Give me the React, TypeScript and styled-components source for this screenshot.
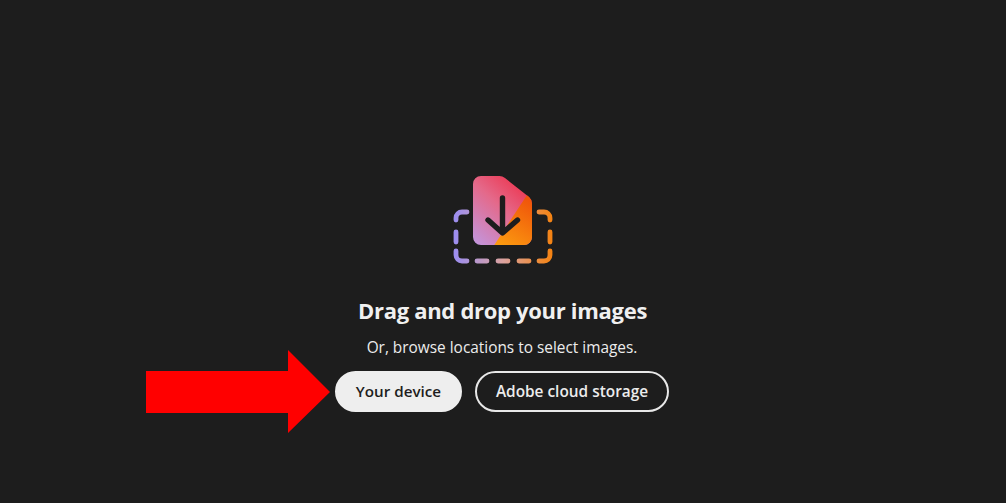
import React from 'react';
import styled, { createGlobalStyle } from 'styled-components';

const GlobalStyle = createGlobalStyle`
  html, body {
    margin: 0;
    padding: 0;
    background: #1d1d1d;
  }
`;

const Page = styled.main`
  height: 503px;
  overflow: hidden;
  padding-top: 175px;
  box-sizing: border-box;
  display: flex;
  flex-direction: column;
  align-items: center;
  background: #1d1d1d;
  color: #f0f0f0;
  font-family: "Open Sans", "Noto Sans", sans-serif;
`;

const DropIcon = styled.svg`
  display: block;
  margin-bottom: 30px;
`;

const Title = styled.h1`
  margin: 0 1px 13px 0;
  font-size: 22px;
  line-height: 30px;
  font-weight: 700;
  letter-spacing: -0.3px;
  color: #f0f0f0;
`;

const Subtitle = styled.p`
  margin: 0 2px 13px 0;
  font-size: 15.4px;
  line-height: 20px;
  color: #ececec;
`;

const Actions = styled.div`
  position: relative;
  display: flex;
  gap: 13px;
  margin-right: 2px;
`;

const Button = styled.button<{ $primary?: boolean }>`
  height: 41px;
  width: ${(p) => (p.$primary ? '127px' : '194px')};
  padding: 0;
  box-sizing: border-box;
  border: 2px solid ${(p) => (p.$primary ? '#eeeeee' : '#e8e8e8')};
  border-radius: 21px;
  background: ${(p) => (p.$primary ? '#eeeeee' : 'transparent')};
  color: ${(p) => (p.$primary ? '#1d1d1d' : '#ececec')};
  font-family: inherit;
  font-size: ${(p) => (p.$primary ? '15.2px' : '15.4px')};
  font-weight: 600;
  line-height: 35px;
`;

const Pointer = styled.svg`
  position: absolute;
  top: -21px;
  right: calc(100% + 5px);
`;

const FileIcon = () => (
  <DropIcon width="100" height="90" viewBox="0 0 100 90" fill="none">
    <defs>
      <linearGradient id="doc" x1="22" y1="68" x2="76" y2="8" gradientUnits="userSpaceOnUse">
        <stop offset="0" stopColor="#c395dc" />
        <stop offset="0.55" stopColor="#e4698a" />
        <stop offset="1" stopColor="#ee2f48" />
      </linearGradient>
      <linearGradient id="corner" x1="48" y1="70" x2="76" y2="26" gradientUnits="userSpaceOnUse">
        <stop offset="0" stopColor="#fb9a10" />
        <stop offset="1" stopColor="#f0560a" />
      </linearGradient>
      <linearGradient id="dash" x1="0" y1="0" x2="100" y2="0" gradientUnits="userSpaceOnUse">
        <stop offset="0" stopColor="#9a8df2" />
        <stop offset="0.5" stopColor="#dba3a0" />
        <stop offset="1" stopColor="#f5820f" />
      </linearGradient>
      <clipPath id="sheet">
        <path d="M28 1H46a9 9 0 0 1 6 2L76 22a9 9 0 0 1 3 7V62a8 8 0 0 1-8 8H28a8 8 0 0 1-8-8V9a8 8 0 0 1 8-8Z" />
      </clipPath>
    </defs>
    <g stroke="url(#dash)" strokeWidth="4.8" strokeLinecap="round">
      <path d="M3 45V43a6 6 0 0 1 6-6H14" />
      <path d="M3 57V67" />
      <path d="M3 76V80a6 6 0 0 0 6 6H14" />
      <path d="M24 86H34M45 86H55M66 86H76" />
      <path d="M86 86H91a6 6 0 0 0 6-6V76" />
      <path d="M97 57V67" />
      <path d="M86 37H91a6 6 0 0 1 6 6V45" />
    </g>
    <g clipPath="url(#sheet)">
      <rect x="20" y="1" width="60" height="69" fill="url(#doc)" />
      <path d="M74 20L40 72H82V20Z" fill="url(#corner)" />
    </g>
    <path
      d="M49.5 23V57M35 45L49.5 58L64.5 45"
      stroke="#1d1d1d"
      strokeWidth="5.4"
      strokeLinecap="round"
      strokeLinejoin="round"
    />
  </DropIcon>
);

export default function App() {
  return (
    <>
      <GlobalStyle />
      <Page>
        <FileIcon />
        <Title>Drag and drop your images</Title>
        <Subtitle>Or, browse locations to select images.</Subtitle>
        <Actions>
          <Pointer width="184" height="84" viewBox="0 0 184 84">
            <path d="M0 21H142V0L184 42L142 83V63H0Z" fill="#ff0000" />
          </Pointer>
          <Button $primary>Your device</Button>
          <Button>Adobe cloud storage</Button>
        </Actions>
      </Page>
    </>
  );
}
